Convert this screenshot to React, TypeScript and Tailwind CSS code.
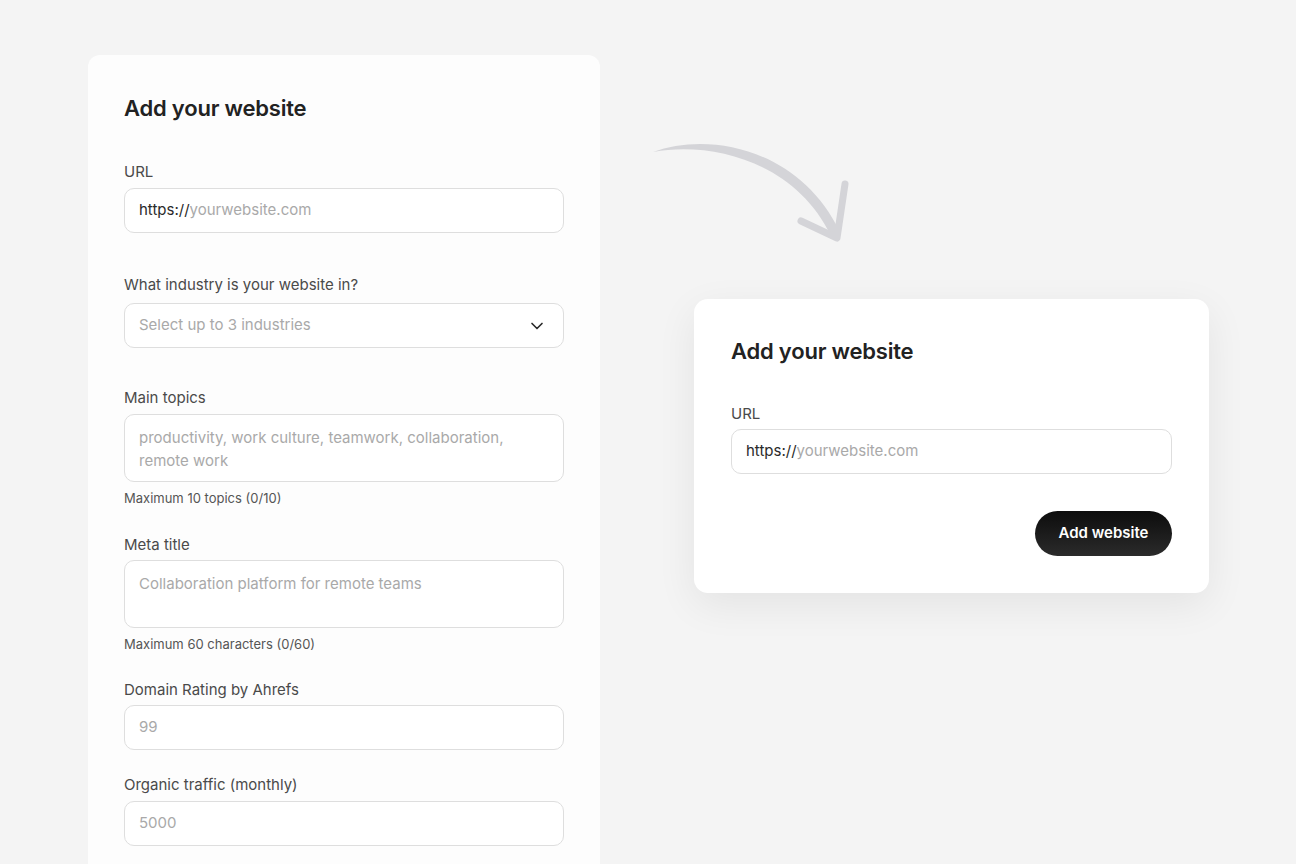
import { ChevronDown } from "lucide-react";

const font = { fontFamily: "Inter, 'Noto Sans', sans-serif" };

const App = () => {
  return (
    <div
      className="h-[864px] w-full overflow-hidden bg-[#f4f4f4] flex items-start pl-[88px] pt-[55px]"
      style={font}
    >
      {/* Left: full form */}
      <div className="w-[512px] shrink-0 rounded-[12px] bg-[#fdfdfd] px-9 pt-[39px] pb-12">
        <h2 className="text-[22px] leading-[28px] font-semibold text-[#222] tracking-[-0.2px]">
          Add your website
        </h2>

        {/* URL */}
        <label className="block mt-[40px] mb-[6px] text-[15px] leading-5 text-[#4a4a4a]">URL</label>
        <div className="h-[45px] rounded-[10px] border border-[#dedede] bg-white px-[14px] flex items-center text-[15px]">
          <span className="text-[#2a2a2a]">https://</span>
          <span className="text-[#a9a9a9]">yourwebsite.com</span>
        </div>

        {/* Industry */}
        <label className="block mt-[42px] mb-[8px] text-[15px] leading-5 text-[#4a4a4a]">
          What industry is your website in?
        </label>
        <div className="h-[45px] rounded-[10px] border border-[#dedede] bg-white pl-[14px] pr-[16px] flex items-center justify-between text-[15px]">
          <span className="text-[#a9a9a9]">Select up to 3 industries</span>
          <ChevronDown size={20} strokeWidth={2} className="text-[#2a2a2a]" />
        </div>

        {/* Main topics */}
        <label className="block mt-[40px] mb-[6px] text-[15px] leading-5 text-[#4a4a4a]">Main topics</label>
        <div className="h-[68px] rounded-[10px] border border-[#dedede] bg-white px-[14px] pt-[11px] text-[15px] leading-[23px] text-[#a9a9a9]">
          productivity, work culture, teamwork, collaboration,
          <br />
          remote work
        </div>
        <p className="mt-[8px] text-[13px] leading-4 text-[#555]">Maximum 10 topics (0/10)</p>

        {/* Meta title */}
        <label className="block mt-[29px] mb-[5px] text-[15px] leading-5 text-[#4a4a4a]">Meta title</label>
        <div className="h-[68px] rounded-[10px] border border-[#dedede] bg-white px-[14px] pt-[11px] text-[15px] leading-[23px] text-[#a9a9a9]">
          Collaboration platform for remote teams
        </div>
        <p className="mt-[8px] text-[13px] leading-4 text-[#555]">Maximum 60 characters (0/60)</p>

        {/* Domain rating */}
        <label className="block mt-[28px] mb-[5px] text-[15px] leading-5 text-[#4a4a4a]">
          Domain Rating by Ahrefs
        </label>
        <div className="h-[45px] rounded-[10px] border border-[#dedede] bg-white px-[14px] flex items-center text-[15px] text-[#a9a9a9]">
          99
        </div>

        {/* Organic traffic */}
        <label className="block mt-[25px] mb-[6px] text-[15px] leading-5 text-[#4a4a4a]">
          Organic traffic (monthly)
        </label>
        <div className="h-[45px] rounded-[10px] border border-[#dedede] bg-white px-[14px] flex items-center text-[15px] text-[#a9a9a9]">
          5000
        </div>
      </div>

      {/* Right: arrow + compact card */}
      <div className="flex flex-col pl-[50px] pt-[80px]">
        <svg width="200" height="110" viewBox="0 0 200 110" fill="none" className="block">
          <path
            d="M3 17 C 60 -4, 150 14, 190 97 L 181 101 C 146 28, 64 6, 3 17 Z"
            fill="#d4d4d8"
          />
          <path
            d="M151 86 L187 103 L195 49"
            stroke="#d4d4d8"
            strokeWidth="7"
            strokeLinecap="round"
            strokeLinejoin="round"
          />
        </svg>

        <div className="mt-[54px] ml-[44px] w-[515px] rounded-[14px] bg-white px-[37px] pt-[38px] pb-[37px] shadow-[0_12px_40px_rgba(0,0,0,0.07)]">
          <h2 className="text-[22px] leading-[28px] font-semibold text-[#222] tracking-[-0.2px]">
            Add your website
          </h2>
          <label className="block mt-[39px] mb-[5px] text-[15px] leading-5 text-[#4a4a4a]">URL</label>
          <div className="h-[45px] rounded-[10px] border border-[#dedede] bg-white px-[14px] flex items-center text-[15px]">
            <span className="text-[#2a2a2a]">https://</span>
            <span className="text-[#a9a9a9]">yourwebsite.com</span>
          </div>
          <div className="mt-[37px] flex justify-end">
            <button className="h-[45px] w-[137px] rounded-full bg-gradient-to-b from-[#0d0d0d] to-[#2b2b2b] text-white text-[15px] font-semibold">
              Add website
            </button>
          </div>
        </div>
      </div>
    </div>
  );
};

export default App;
